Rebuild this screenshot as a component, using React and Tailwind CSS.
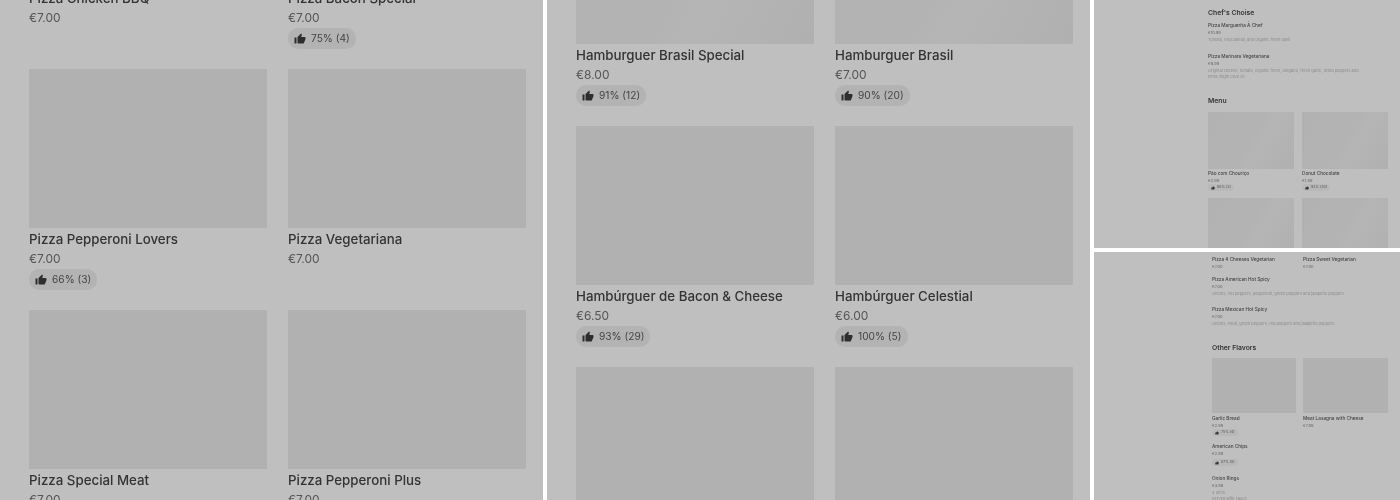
import { MdThumbUp } from 'react-icons/md';

const font = { fontFamily: '"Inter", "Liberation Sans", sans-serif' };

const pizzas = [
  { name: 'Pizza Chicken BBQ', price: '€7.00' },
  { name: 'Pizza Bacon Special', price: '€7.00', rating: '75% (4)' },
  { name: 'Pizza Pepperoni Lovers', price: '€7.00', rating: '66% (3)' },
  { name: 'Pizza Vegetariana', price: '€7.00' },
  { name: 'Pizza Special Meat', price: '€7.00' },
  { name: 'Pizza Pepperoni Plus', price: '€7.00' },
];

const burgers = [
  { name: 'Hamburguer Brasil Special', price: '€8.00', rating: '91% (12)', shine: true },
  { name: 'Hamburguer Brasil', price: '€7.00', rating: '90% (20)', shine: true },
  { name: 'Hambúrguer de Bacon & Cheese', price: '€6.50', rating: '93% (29)' },
  { name: 'Hambúrguer Celestial', price: '€6.00', rating: '100% (5)' },
  { name: 'Hambúrguer Vegano', price: '€7.00' },
  { name: 'Hambúrguer Duplo', price: '€8.00' },
];

function Card({ item }) {
  return (
    <div className="h-[241px]">
      <div className={`h-[159px] ${item.shine ? 'bg-[linear-gradient(120deg,#b2b2b2_0%,#b3b3b3_50%,#b5b5b5_60%,#b0b0b0_100%)]' : 'bg-[#b1b1b1]'}`}></div>
      <p className="mt-[1px] text-[13.3px] leading-[20px] font-medium text-[#333333] blur-[0.2px]">{item.name}</p>
      <p className="text-[12px] leading-[18px] mt-[1px] text-[#555555] blur-[0.2px]">{item.price}</p>
      <div className="mt-[1px]">
        {item.rating && (
          <div className="flex h-[21px] w-fit items-center gap-[5px] rounded-[10px] bg-[#b3b3b3] pl-[6px] pr-[6px]">
            <MdThumbUp className="text-[#2e2e2e]" size={12} />
            <span className="text-[10.2px] text-[#444444] blur-[0.2px]">{item.rating}</span>
          </div>
        )}
      </div>
    </div>
  );
}

function MiniHeading({ children, className }) {
  return <h2 className={`text-[6.8px] leading-[10px] font-semibold text-[#333333] blur-[0.25px] ${className}`}>{children}</h2>;
}

function MiniItem({ name, price, desc, className }) {
  return (
    <div className={`blur-[0.35px] ${className}`}>
      <p className="text-[4.7px] leading-[8px] font-medium text-[#444444]">{name}</p>
      <p className="text-[4px] leading-[7px] text-[#666666]">{price}</p>
      {desc && <p className="mt-[1px] max-w-[160px] whitespace-pre-line text-[4px] leading-[6px] text-[#8c8c8c]">{desc}</p>}
    </div>
  );
}

function MiniPill({ label, className }) {
  return (
    <div className={`flex h-[7px] w-fit items-center gap-[2px] rounded-[3px] bg-[#b8b8b8] px-[3px] blur-[0.3px] ${className}`}>
      <MdThumbUp className="text-[#2e2e2e]" size={4} />
      <span className="text-[3.6px] text-[#555555]">{label}</span>
    </div>
  );
}

function MiniThumb({ h, shine }) {
  return <div className={`${h} ${shine ? 'bg-[linear-gradient(120deg,#b2b2b2_0%,#b3b3b3_50%,#b5b5b5_60%,#b0b0b0_100%)]' : 'bg-[#b1b1b1]'}`}></div>;
}

export default function App() {
  return (
    <div className="flex h-[500px] w-[1400px] gap-[4px] overflow-hidden bg-white" style={font}>
      {/* Pizza column */}
      <div className="w-[543px] overflow-hidden bg-[#bfbfbf] pl-[29px] pr-[17px]">
        <div className="-mt-[172px] grid grid-cols-2 gap-x-[21px]">
          {pizzas.map((item) => <Card key={item.name} item={item} />)}
        </div>
      </div>

      {/* Burger column */}
      <div className="w-[543px] overflow-hidden bg-[#bfbfbf] pl-[29px] pr-[17px]">
        <div className="-mt-[115px] grid grid-cols-2 gap-x-[21px]">
          {burgers.map((item) => <Card key={item.name} item={item} />)}
        </div>
      </div>

      {/* Small previews */}
      <div className="flex w-[306px] flex-col gap-[4px]">
        <div className="h-[248px] overflow-hidden bg-[#bfbfbf] pl-[114px] pr-[12px] pt-[8px]">
          <MiniHeading>Chef's Choise</MiniHeading>
          <MiniItem className="mt-[3px]" name="Pizza Marguerita À Chef" price="€10.99" desc="Tomato, mozzarella, and organic fresh basil" />
          <MiniItem className="mt-[9px]" name="Pizza Marinara Vegetariana" price="€9.99" desc="Original cheese, tomato, organic fresh, oregano, fresh garlic, dried peppers and extra virgin olive oil" />
          <MiniHeading className="mt-[16px]">Menu</MiniHeading>
          <div className="mt-[6px] grid grid-cols-2 gap-x-[8px] gap-y-[7px]">
            <div>
              <MiniThumb h="h-[57px]" shine />
              <MiniItem name="Pão com Chouriço" price="€2.99" />
              <MiniPill label="86% (3)" />
            </div>
            <div>
              <MiniThumb h="h-[57px]" shine />
              <MiniItem name="Donut Chocolate" price="€1.99" />
              <MiniPill label="93% (30)" />
            </div>
            <MiniThumb h="h-[57px]" shine />
            <MiniThumb h="h-[57px]" shine />
          </div>
        </div>

        <div className="h-[248px] overflow-hidden bg-[#bfbfbf] pl-[118px] pr-[12px] pt-[3px]">
          <div className="grid grid-cols-[84px_85px] gap-x-[7px]">
            <MiniItem name="Pizza 4 Cheeses Vegetarian" price="€7.00" />
            <MiniItem name="Pizza Sweet Vegetarian" price="€7.00" />
          </div>
          <MiniItem className="mt-[5px]" name="Pizza American Hot Spicy" price="€7.00" desc="Onions, red peppers, pepperoni, green peppers and jalapeño peppers" />
          <MiniItem className="mt-[8px]" name="Pizza Mexican Hot Spicy" price="€7.00" desc="Onions, meat, green peppers, red peppers and jalapeño peppers" />
          <MiniHeading className="mt-[16px]">Other Flavors</MiniHeading>
          <div className="mt-[5px] grid grid-cols-[84px_85px] gap-x-[7px]">
            <div>
              <MiniThumb h="h-[55px]" />
              <MiniItem className="mt-[1px]" name="Garlic Bread" price="€2.99" />
              <MiniPill label="75% (4)" />
            </div>
            <div>
              <MiniThumb h="h-[55px]" />
              <MiniItem className="mt-[1px]" name="Meat Lasagna with Cheese" price="€7.99" />
            </div>
          </div>
          <MiniItem className="mt-[6px]" name="American Chips" price="€2.99" />
          <MiniPill className="mt-[2px]" label="87% (8)" />
          <MiniItem className="mt-[8px]" name="Onion Rings" price="€3.99" desc={'4 units\nServed with sauce'} />
        </div>
      </div>
    </div>
  );
}
